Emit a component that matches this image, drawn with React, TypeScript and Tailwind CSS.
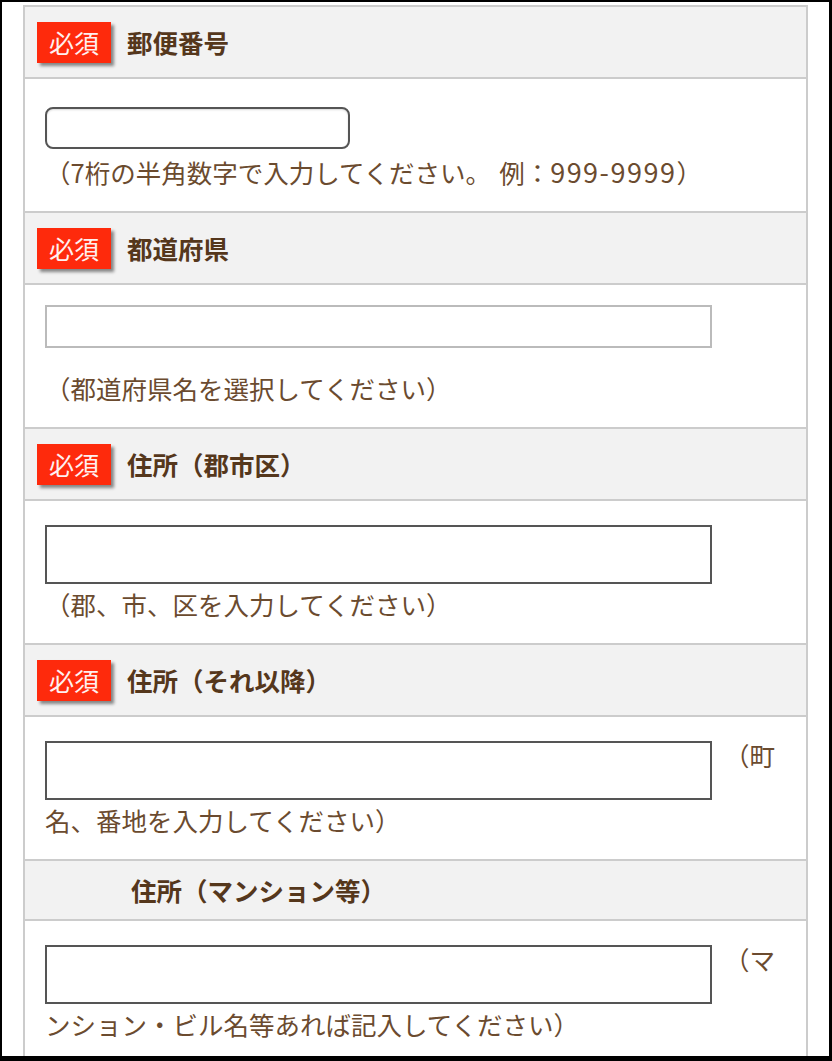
import React from "react";

const font = "font-['Noto_Sans_CJK_JP','Noto_Sans',sans-serif]";

function Badge() {
  return (
    <div className="w-[74px] h-[41px] bg-[#fe2a0c] flex items-center justify-center text-[25px] leading-none text-[#fff0f0] shadow-[3px_3px_3px_rgba(0,0,0,0.45)] shrink-0">
      必須
    </div>
  );
}

function Header({ label, required = true }: { label: string; required?: boolean }) {
  return (
    <div
      className={`flex items-center gap-4 pl-3 bg-[#f2f2f2] border-b-2 border-[#cccccc] ${
        required ? "h-[72px]" : "h-[60px]"
      }`}
    >
      {required ? <Badge /> : <div className="w-[78px] shrink-0" />}
      <span className="text-[25.5px] font-bold text-[#55371c] leading-none">{label}</span>
    </div>
  );
}

const helper = "text-[25.5px] leading-[40px] text-[#6b4b2f]";

export default function App() {
  return (
    <div className={`${font} h-[1061px] w-[832px] overflow-hidden bg-white border-black border-t-2 border-l-2 border-r-[3px] border-b-[5px]`}>
      <div className="pt-[3px] pl-[21px]">
        <div className="w-[785px] border-x-2 border-t-2 border-[#cccccc]">
          <Header label="郵便番号" />
          <div className="bg-white border-b-2 border-[#cccccc] pl-[20px] pt-[28px] pb-[19px]">
            <input
              type="text"
              className="block w-[305px] h-[42px] rounded-[8px] border-2 border-[#555555] bg-white shadow-[inset_0_1px_2px_rgba(0,0,0,0.15)] outline-none"
            />
            <div className={`${helper} mt-[3px]`}>
              （7桁の半角数字で入力してください。
              <span className="ml-[8px]">例：</span>
              <span className="text-[27px] tracking-[1.5px]">999-9999</span>）
            </div>
          </div>

          <Header label="都道府県" />
          <div className="bg-white border-b-2 border-[#cccccc] pl-[20px] pt-[20px] pb-[19px]">
            <div className="w-[667px] h-[43px] border-2 border-[#bbbbbb] bg-white" />
            <div className={`${helper} mt-[20px]`}>（都道府県名を選択してください）</div>
          </div>

          <Header label="住所（郡市区）" />
          <div className="bg-white border-b-2 border-[#cccccc] pl-[20px] pt-[24px] pb-[19px]">
            <input
              type="text"
              className="block w-[667px] h-[59px] border-2 border-[#555555] bg-white outline-none"
            />
            <div className={helper}>（郡、市、区を入力してください）</div>
          </div>

          <Header label="住所（それ以降）" />
          <div className="bg-white border-b-2 border-[#cccccc] pl-[20px] pt-[24px] pb-[19px]">
            <div className={helper}>
              <input
                type="text"
                className="inline-block align-top w-[667px] h-[59px] border-2 border-[#555555] bg-white outline-none"
              />
              <span className="inline-block align-top ml-[12px] leading-[28px]">（町</span>
              <br />
              名、番地を入力してください）
            </div>
          </div>

          <Header label="住所（マンション等）" required={false} />
          <div className="bg-white pl-[20px] pt-[24px] pb-[19px]">
            <div className={helper}>
              <input
                type="text"
                className="inline-block align-top w-[667px] h-[59px] border-2 border-[#555555] bg-white outline-none"
              />
              <span className="inline-block align-top ml-[12px] leading-[28px]">（マ</span>
              <br />
              ンション・ビル名等あれば記入してください）
            </div>
          </div>
        </div>
      </div>
    </div>
  );
}
